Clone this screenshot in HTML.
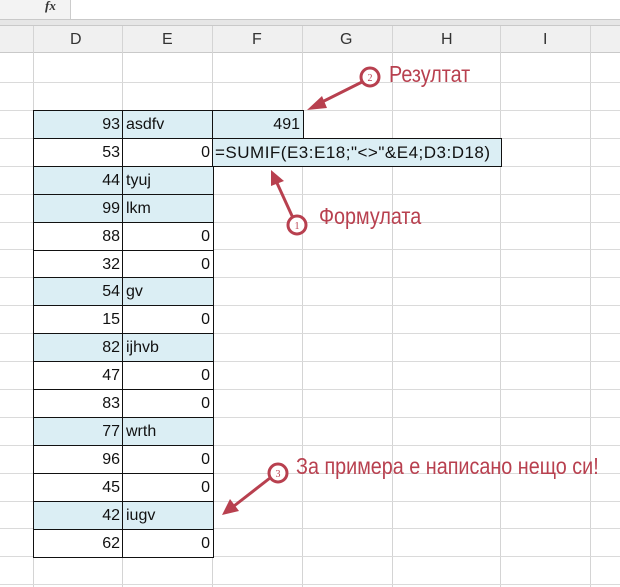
<!DOCTYPE html>
<html><head><meta charset="utf-8"><style>
body{margin:0;width:620px;height:587px;overflow:hidden;background:#fff;font-family:"Liberation Sans",sans-serif;position:relative}
.a{position:absolute}
.cell{position:absolute;box-sizing:border-box;font-size:16px;line-height:28px;padding:0 3px;color:#111;white-space:nowrap;overflow:hidden}
.ann{position:absolute;color:#b8404f;font-family:"Liberation Sans",sans-serif;font-size:23px;white-space:nowrap;transform-origin:0 0}
</style></head><body>
<div class="a" style="left:0;top:0;width:70px;height:19px;background:#f3f3f3;border-right:1px solid #ccc"></div>
<div class="a" style="left:45px;top:-2px;font-family:'Liberation Serif',serif;font-style:italic;font-weight:bold;font-size:13px;color:#333">fx</div>
<div class="a" style="left:0;top:19px;width:620px;height:7px;background:#e6e6e6;border-top:1px solid #c9c9c9;border-bottom:1px solid #c9c9c9;box-sizing:border-box"></div>
<div class="a" style="left:0;top:26px;width:620px;height:27px;background:#f0f0f0;border-bottom:1px solid #c9c9c9;box-sizing:border-box"></div>
<svg class="a" style="left:0;top:0" width="620" height="587">
<g stroke="#d4d4d4" stroke-width="1">
<line x1="33.5" y1="26" x2="33.5" y2="587"/><line x1="122.5" y1="26" x2="122.5" y2="587"/><line x1="212.5" y1="26" x2="212.5" y2="587"/><line x1="302.5" y1="26" x2="302.5" y2="587"/><line x1="392.5" y1="26" x2="392.5" y2="587"/><line x1="500.5" y1="26" x2="500.5" y2="587"/><line x1="590.5" y1="26" x2="590.5" y2="587"/>
</g>
<g stroke="#dadada" stroke-width="1" id="h"></g>
</svg>
<div class="a" style="top:26px;left:0;width:620px;height:27px;font-size:16px;line-height:27px;color:#333">
<span class="a" style="left:70px">D</span><span class="a" style="left:162px">E</span><span class="a" style="left:252px">F</span><span class="a" style="left:340px">G</span><span class="a" style="left:441px">H</span><span class="a" style="left:543px">I</span>
</div>
<div id="grid"></div>
<script>
var g=document.getElementById('h'),s='';
for(var i=0;i<20;i++){var y=82+i*27.9;s+='<line x1="0" y1="'+(Math.round(y)+.5)+'" x2="620" y2="'+(Math.round(y)+.5)+'"/>';}
g.innerHTML=s;
var rows=[[93,'asdfv'],[53,0],[44,'tyuj'],[99,'lkm'],[88,0],[32,0],[54,'gv'],[15,0],[82,'ijhvb'],[47,0],[83,0],[77,'wrth'],[96,0],[45,0],[42,'iugv'],[62,0]];
var h='';
rows.forEach(function(r,i){var y=Math.round(110+i*27.9);var t=typeof r[1]=='string';var bg=t?'#dbeef4':'#fff';
h+='<div class="cell" style="left:33px;top:'+y+'px;width:91px;height:29px;border:1.5px solid #111;background:'+bg+';text-align:right">'+r[0]+'</div>';
h+='<div class="cell" style="left:122px;top:'+y+'px;width:92px;height:29px;border:1.5px solid #111;background:'+bg+';text-align:'+(t?'left':'right')+'">'+r[1]+'</div>';});
document.getElementById('grid').innerHTML=h;
</script>
<div class="cell" style="left:212px;top:110px;width:92px;height:29px;border:1.5px solid #111;background:#dbeef4;text-align:right">491</div>
<div class="cell" style="left:212px;top:138px;width:290px;height:29px;border:1.5px solid #111;background:#dbeef4;text-align:left;font-size:17px;letter-spacing:0.5px;padding-left:2px">=SUMIF(E3:E18;"&lt;&gt;"&amp;E4;D3:D18)</div>
<svg class="a" style="left:0;top:0" width="620" height="587">
<g stroke="#b8404f" stroke-width="3" fill="#b8404f">
<line x1="362" y1="82" x2="318" y2="104"/><polygon points="307,110 322,96 327,108" stroke="none"/>
<line x1="293" y1="218" x2="277" y2="183"/><polygon points="271,170 271,186 284,181" stroke="none"/>
<line x1="270" y1="478" x2="234" y2="506"/><polygon points="222,515 230,499 239,511" stroke="none"/>
</g>
<g fill="#fff" stroke="#b8404f" stroke-width="3">
<circle cx="370" cy="77" r="9"/><circle cx="297" cy="225" r="9"/><circle cx="278" cy="473" r="9"/>
</g>
<g fill="#b8404f" font-family="Liberation Serif,serif" font-size="10" text-anchor="middle">
<text x="370" y="81">2</text><text x="297" y="229">1</text><text x="278" y="477">3</text>
</g>
</svg>
<div class="ann" style="left:389px;top:61px;transform:scaleX(0.86)">Резултат</div>
<div class="ann" style="left:319px;top:203px;transform:scaleX(0.86)">Формулата</div>
<div class="ann" style="left:296px;top:453px;transform:scaleX(0.86)">За примера е написано нещо си!</div>
</body></html>
